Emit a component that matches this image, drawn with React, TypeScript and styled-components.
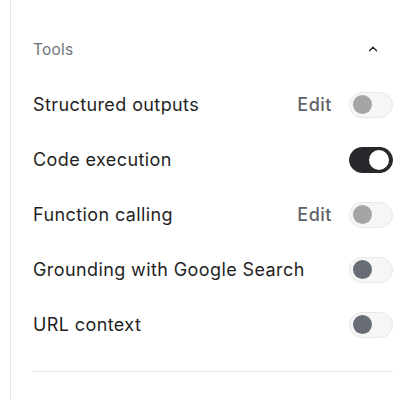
import React from "react"
import styled, { createGlobalStyle } from "styled-components"

const GlobalStyle = createGlobalStyle`
  html, body {
    margin: 0;
    padding: 0;
    background: #ffffff;
  }
  body {
    font-family: Inter, "Noto Sans", sans-serif;
  }
`

const Panel = styled.div`
  margin-left: 10px;
  border-left: 1px solid #e6e6e6;
  padding: 36px 10px 0 22px;
  height: 400px;
  box-sizing: border-box;
`

const Header = styled.div`
  display: flex;
  align-items: center;
  justify-content: space-between;
  height: 26px;
  margin-bottom: 15px;
`

const HeaderTitle = styled.span`
  font-size: 15.5px;
  color: #70757a;
  font-weight: 400;
  letter-spacing: 0.2px;
`

const Chevron = styled.svg`
  width: 14px;
  height: 14px;
  margin-right: 13px;
  color: #202124;
`

const Row = styled.div`
  display: flex;
  align-items: center;
  height: 55px;
`

const Label = styled.span`
  flex: 1;
  font-size: 18px;
  color: #1f1f1f;
  font-weight: 400;
  letter-spacing: 0.4px;
`

const EditLink = styled.span`
  font-size: 18px;
  font-weight: 500;
  color: #5f6368;
  letter-spacing: 0.5px;
  margin-right: 17px;
`

const Track = styled.div<{ $on: boolean }>`
  width: 44px;
  height: 26px;
  border-radius: 13px;
  box-sizing: border-box;
  display: flex;
  align-items: center;
  padding: 0 3px;
  justify-content: ${(p) => (p.$on ? "flex-end" : "flex-start")};
  background: ${(p) => (p.$on ? "#27282b" : "#f6f6f6")};
  border: 1px solid ${(p) => (p.$on ? "#27282b" : "#e8e8e8")};
`

const Knob = styled.div<{ $on: boolean; $color: string }>`
  width: ${(p) => (p.$on ? 20 : 19)}px;
  height: ${(p) => (p.$on ? 20 : 19)}px;
  border-radius: 50%;
  background: ${(p) => p.$color};
`

const Divider = styled.div`
  height: 1px;
  background: #e8e8e8;
  margin-top: 19px;
`

interface Tool {
  label: string
  edit?: boolean
  on?: boolean
  knob: string
}

const tools: Tool[] = [
  { label: "Structured outputs", edit: true, knob: "#a5a5a5" },
  { label: "Code execution", on: true, knob: "#ffffff" },
  { label: "Function calling", edit: true, knob: "#a5a5a5" },
  { label: "Grounding with Google Search", knob: "#686c75" },
  { label: "URL context", knob: "#686c75" },
]

const App = () => {
  return (
    <>
      <GlobalStyle />
      <Panel>
        <Header>
          <HeaderTitle>Tools</HeaderTitle>
          <Chevron viewBox="0 0 24 24" fill="none" stroke="currentColor" strokeWidth="2.2" strokeLinecap="round" strokeLinejoin="round">
            <path d="M6 15l6-6 6 6" />
          </Chevron>
        </Header>
        {tools.map((t) => (
          <Row key={t.label}>
            <Label>{t.label}</Label>
            {t.edit && <EditLink>Edit</EditLink>}
            <Track $on={!!t.on}>
              <Knob $on={!!t.on} $color={t.knob} />
            </Track>
          </Row>
        ))}
        <Divider />
      </Panel>
    </>
  )
}

export default App
